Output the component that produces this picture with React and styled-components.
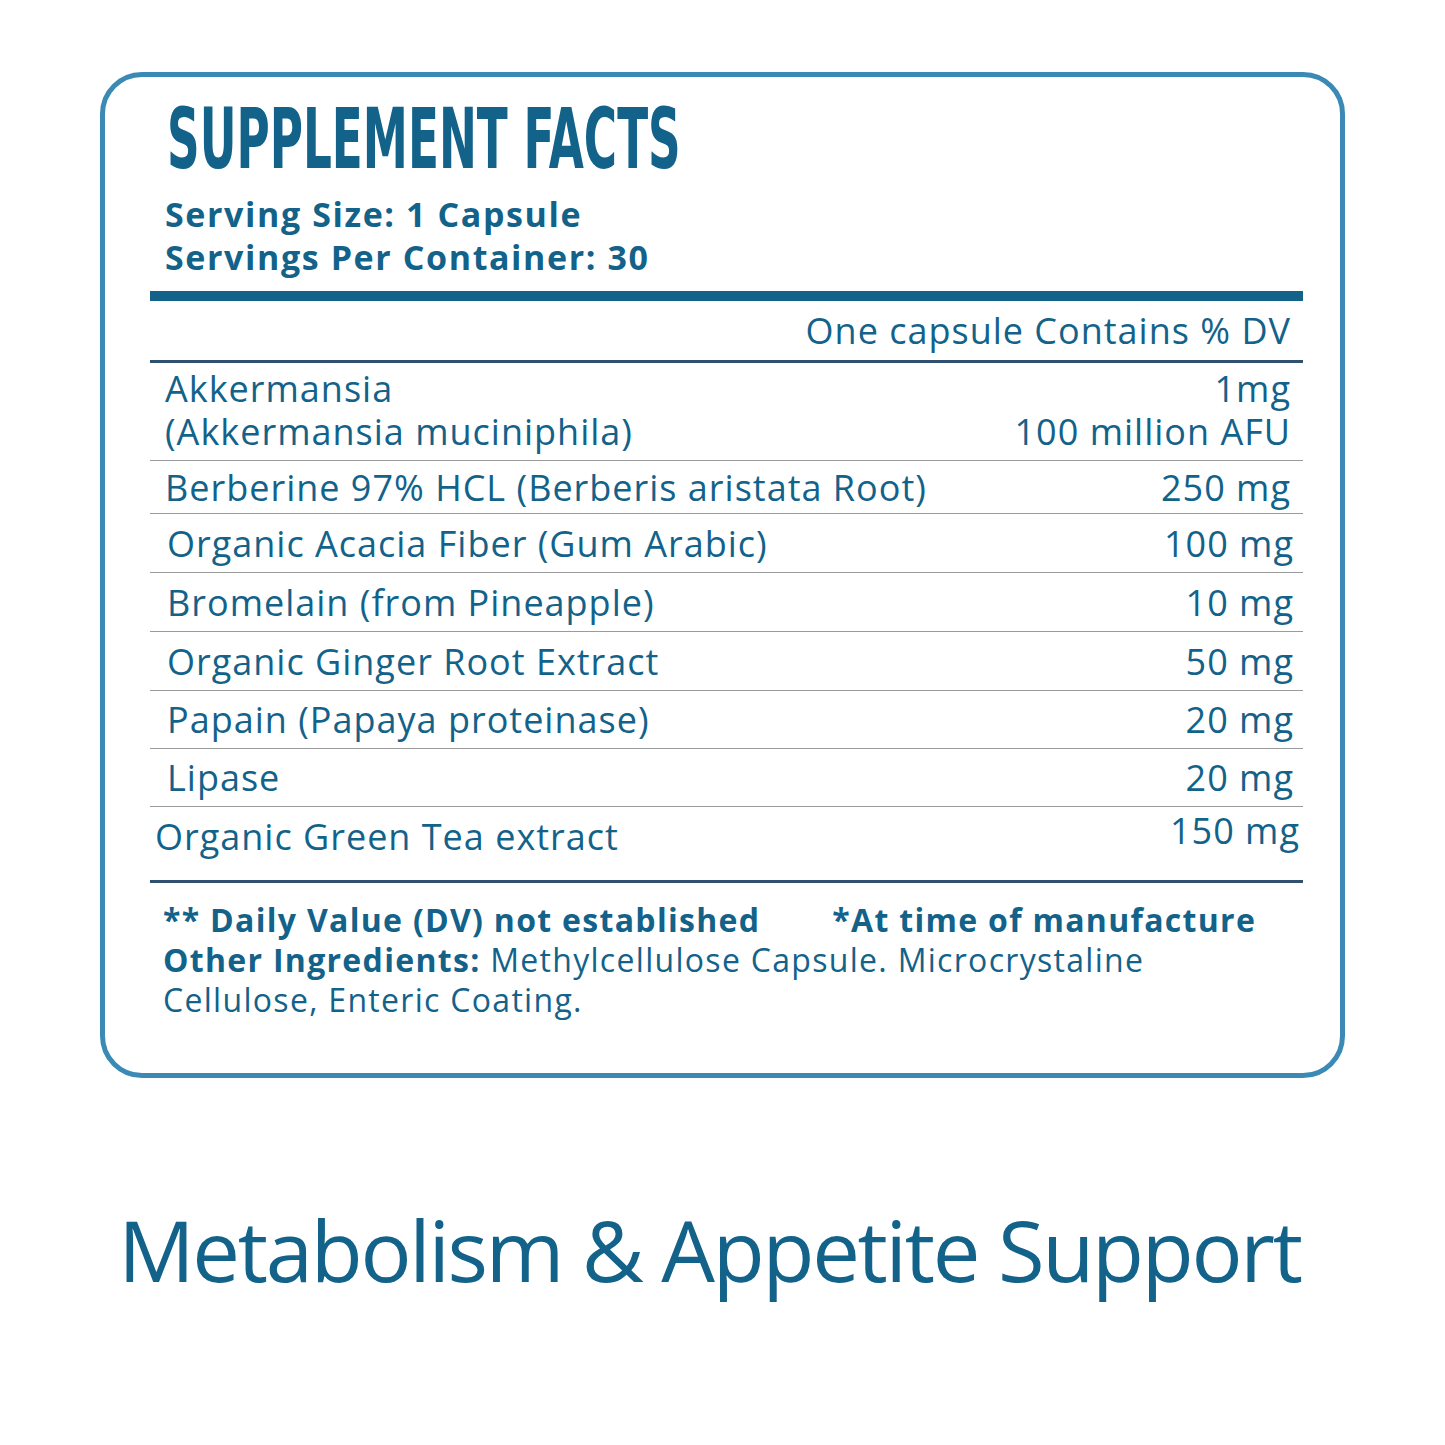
import React from "react";
import styled, { createGlobalStyle } from "styled-components";

const Global = createGlobalStyle`
  html, body { margin: 0; padding: 0; background: #ffffff; }
  body { font-family: "Open Sans", "Liberation Sans", sans-serif; color: #12628a; }
`;

const Page = styled.div`
  width: 1445px;
  height: 1445px;
  display: flex;
  flex-direction: column;
  align-items: center;
`;

const Card = styled.section`
  box-sizing: border-box;
  width: 1245px;
  height: 1006px;
  margin-top: 72px;
  border: 5px solid #3a8ab5;
  border-radius: 42px;
  padding: 14px 37px 0 45px;
  display: flex;
  flex-direction: column;
`;

const Title = styled.h1`
  margin: 6px 0 0 17px;
  font-family: "Liberation Sans Narrow", "DejaVu Sans Condensed", "Liberation Sans", sans-serif;
  font-weight: 700;
  font-size: 84px;
  line-height: 84px;
  color: #12628a;
  transform: scaleX(0.6);
  transform-origin: left center;
  white-space: nowrap;
`;

const Serving = styled.div`
  margin: 12px 0 0 15px;
  font-weight: 700;
  font-size: 34px;
  line-height: 43px;
  letter-spacing: 1.6px;
  color: #12628a;
`;

const ThickBar = styled.div`
  height: 10px;
  margin-top: 12px;
  background: #12628a;
`;

const HeaderRow = styled.div`
  height: 59px;
  display: flex;
  justify-content: flex-end;
  align-items: center;
  padding-right: 12px;
  font-size: 36px;
  letter-spacing: 1px;
  color: #12628a;
`;

const Rule = styled.div`
  height: 3px;
  background: #30506f;
`;

const Row = styled.div`
  box-sizing: border-box;
  height: ${(p) => p.$h}px;
  display: flex;
  justify-content: space-between;
  align-items: ${(p) => (p.$pad != null ? "flex-start" : "center")};
  padding: ${(p) => p.$pad || 0}px ${(p) => p.$right}px 0 ${(p) => p.$indent}px;
  border-bottom: ${(p) => (p.$last ? "none" : "1px solid #9b9b9b")};
  font-size: 36px;
  line-height: 43px;
  letter-spacing: 1px;
  color: #12628a;
`;

const Cell = styled.div`
  text-align: ${(p) => (p.$right ? "right" : "left")};
  white-space: nowrap;
  margin-top: ${(p) => p.$lift || 0}px;
`;

const Notes = styled.div`
  margin: 17px 0 0 13px;
  font-size: 32px;
  line-height: 40px;
  letter-spacing: 1.3px;
  color: #12628a;
`;

const NoteLine = styled.div`
  display: flex;
  gap: 72px;
  font-weight: 700;
`;

const Bold = styled.span`
  font-weight: 700;
`;

const Tagline = styled.div`
  margin: 121px 26px 0 0;
  font-family: "Open Sans", "Liberation Sans", sans-serif;
  font-weight: 400;
  font-size: 85px;
  line-height: 100px;
  letter-spacing: -2.3px;
  color: #12628a;
  white-space: nowrap;
`;

const rows = [
  { name: ["Akkermansia", "(Akkermansia muciniphila)"], value: ["1mg", "100 million AFU"], h: 98, pad: 4, indent: 15, right: 12 },
  { name: ["Berberine 97% HCL (Berberis aristata Root)"], value: ["250 mg"], h: 53, indent: 15, right: 12 },
  { name: ["Organic Acacia Fiber (Gum Arabic)"], value: ["100 mg"], h: 59, indent: 17, right: 9 },
  { name: ["Bromelain (from Pineapple)"], value: ["10 mg"], h: 59, indent: 17, right: 9 },
  { name: ["Organic Ginger Root Extract"], value: ["50 mg"], h: 59, indent: 17, right: 9 },
  { name: ["Papain (Papaya proteinase)"], value: ["20 mg"], h: 58, indent: 17, right: 9 },
  { name: ["Lipase"], value: ["20 mg"], h: 58, indent: 17, right: 9 },
  { name: ["Organic Green Tea extract"], value: ["150 mg"], h: 73, pad: 8, lift: -6, indent: 5, right: 3, last: true },
];

export default function App() {
  return (
    <Page>
      <Global />
      <Card>
        <Title>SUPPLEMENT FACTS</Title>
        <Serving>
          Serving Size: 1 Capsule
          <br />
          Servings Per Container: 30
        </Serving>
        <ThickBar />
        <HeaderRow>One capsule Contains % DV</HeaderRow>
        <Rule />
        {rows.map((r, i) => (
          <Row key={i} $h={r.h} $pad={r.pad} $indent={r.indent} $right={r.right} $last={r.last}>
            <Cell>
              {r.name.map((n, j) => (
                <div key={j}>{n}</div>
              ))}
            </Cell>
            <Cell $right $lift={r.lift}>
              {r.value.map((v, j) => (
                <div key={j}>{v}</div>
              ))}
            </Cell>
          </Row>
        ))}
        <Rule />
        <Notes>
          <NoteLine>
            <span>** Daily Value (DV) not established</span>
            <span>*At time of manufacture</span>
          </NoteLine>
          <div>
            <Bold>Other Ingredients:</Bold> Methylcellulose Capsule. Microcrystaline
          </div>
          <div>Cellulose, Enteric Coating.</div>
        </Notes>
      </Card>
      <Tagline>Metabolism &amp; Appetite Support</Tagline>
    </Page>
  );
}
